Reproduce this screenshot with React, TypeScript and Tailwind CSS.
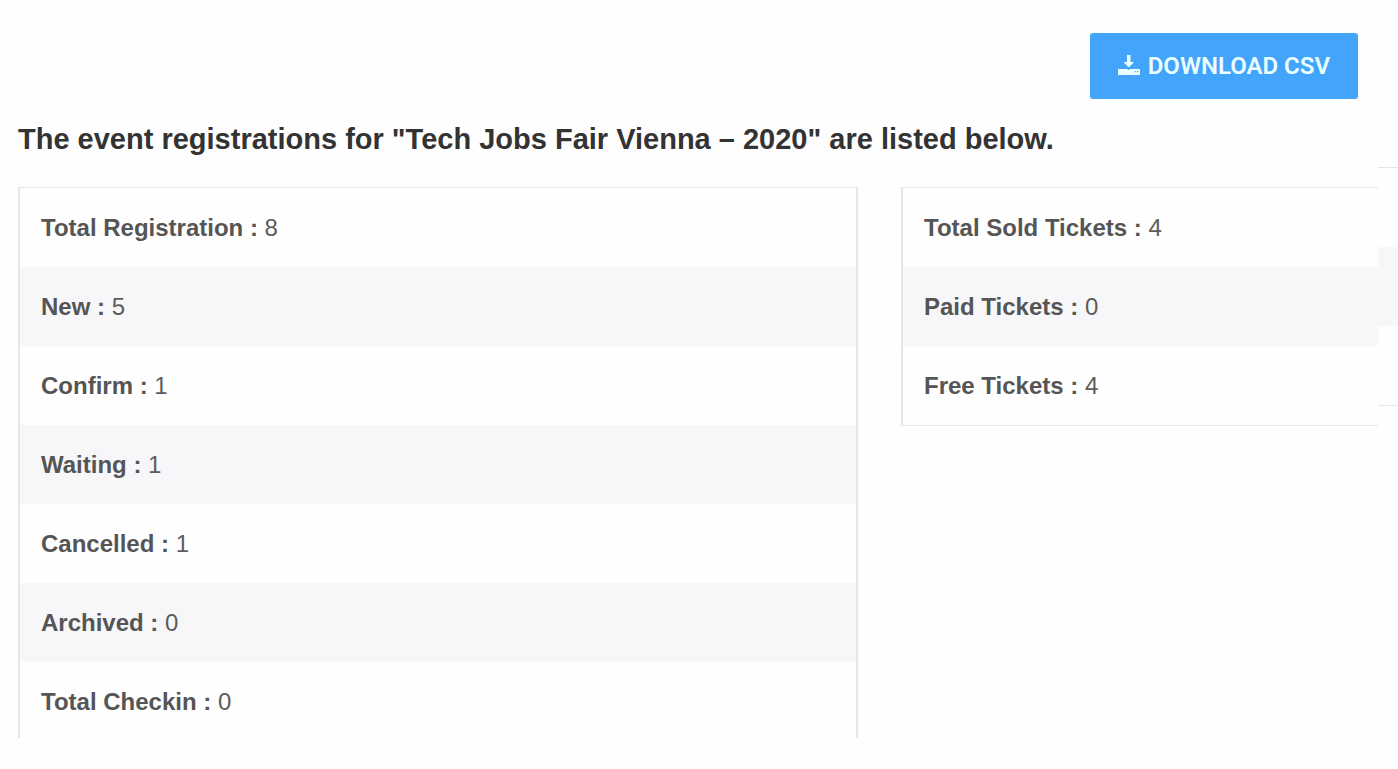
type Stat = {
  label: string
  value: number
}

const registrations: Stat[] = [
  { label: 'Total Registration', value: 8 },
  { label: 'New', value: 5 },
  { label: 'Confirm', value: 1 },
  { label: 'Waiting', value: 1 },
  { label: 'Cancelled', value: 1 },
  { label: 'Archived', value: 0 },
  { label: 'Total Checkin', value: 0 },
]

const tickets: Stat[] = [
  { label: 'Total Sold Tickets', value: 4 },
  { label: 'Paid Tickets', value: 0 },
  { label: 'Free Tickets', value: 4 },
]

function StatRows({ stats }: { stats: Stat[] }) {
  return (
    <>
      {stats.map((stat) => (
        <li key={stat.label} className="flex h-[79px] items-center px-[21px] even:bg-[#f7f7fa]">
          <p className="text-[24px] leading-8 text-[#5c5c5c]">
            <strong className="font-bold text-[#555555]">{stat.label} :</strong> {stat.value}
          </p>
        </li>
      ))}
    </>
  )
}

function DownloadIcon() {
  return (
    <svg viewBox="0 0 22 22" className="size-[22px]" fill="currentColor" aria-hidden="true">
      <path d="M9 0h3.500v7H16l-5.200 5.500L5.500 7H9z" />
      <path
        fillRule="evenodd"
        d="M.5 14H9l1.800 1L12.500 14h9q.5 0 .5.5v5q0 .5-.5.5H.5q-.5 0-.5-.5v-5q0-.5.5-.5zM16.500 16v1.200h1.200V16zm2.500 0v1.200h1.200V16z"
      />
    </svg>
  )
}

export default function App() {
  return (
    <div className="flex min-h-screen overflow-hidden bg-[#fefefe] font-['Liberation_Sans',Arial,sans-serif]">
      <main className="min-w-0 flex-1 pl-[18px]">
        <div className="flex justify-end pt-[33px] pr-5">
          <button
            type="button"
            className="flex h-[66px] cursor-pointer items-center gap-2 rounded-[3px] bg-[#42a4fa] px-7 font-[Roboto,sans-serif] text-[24px] font-semibold text-[#eaffff]"
          >
            <DownloadIcon />
            DOWNLOAD CSV
          </button>
        </div>

        <h1 className="mt-5 text-[29px] leading-10 font-bold text-[#333333]">
          The event registrations for "Tech Jobs Fair Vienna – 2020" are listed below.
        </h1>

        <div className="mt-7 grid grid-cols-[840fr_477fr] items-start gap-[43px]">
          <ul className="max-h-[551px] overflow-hidden border-x-2 border-t border-[#e6e6e6]">
            <StatRows stats={registrations} />
          </ul>
          <ul className="border-y border-l-2 border-[#e6e6e6]">
            <StatRows stats={tickets} />
          </ul>
        </div>
      </main>

      {/* edge of the next panel */}
      <aside className="w-5 pt-[167px]">
        <div className="border-y border-[#e6e6e6]">
          <div className="h-[79px]" />
          <div className="h-[79px] bg-[#f7f7fa]" />
          <div className="h-[79px]" />
        </div>
      </aside>
    </div>
  )
}
